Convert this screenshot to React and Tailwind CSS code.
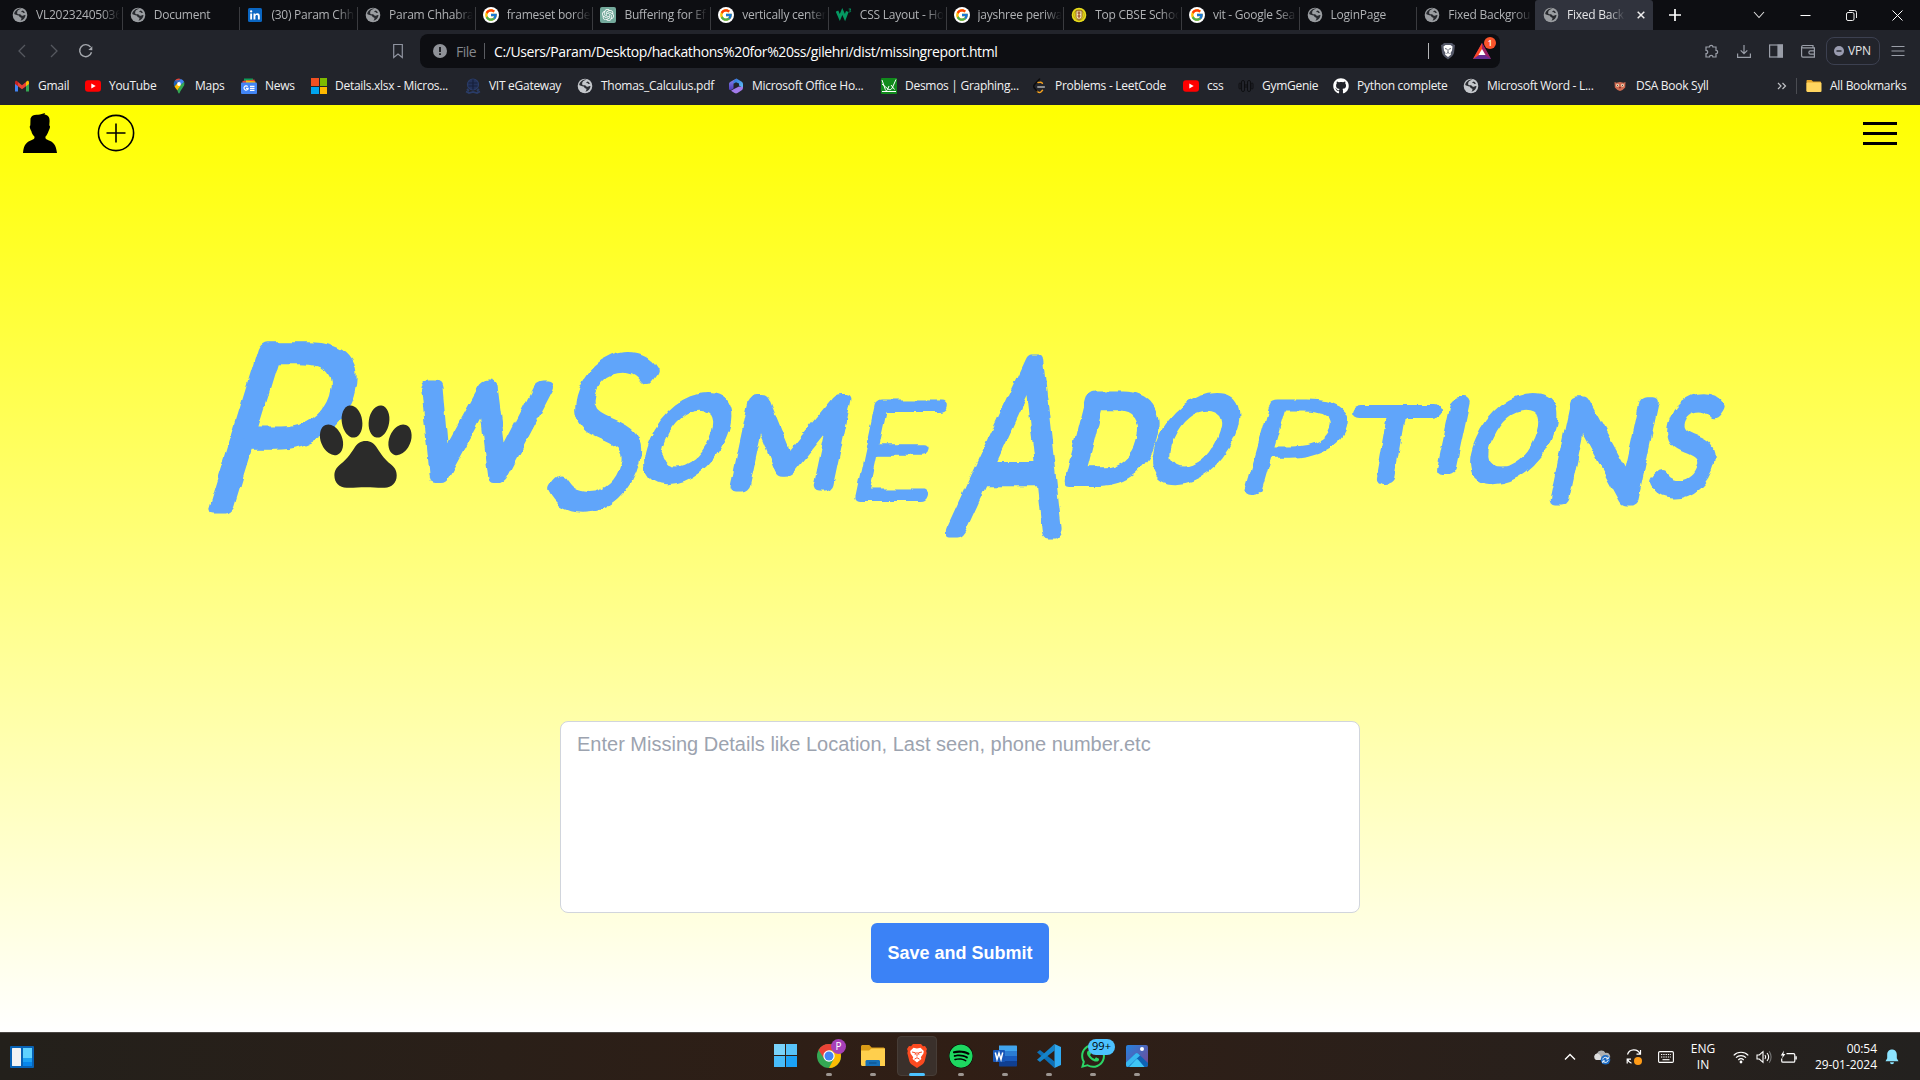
import React from "react";
import { FcGoogle } from "react-icons/fc";
import { SiOpenai, SiWhatsapp } from "react-icons/si";
import { FaGithub, FaSpotify } from "react-icons/fa";

const Globe = ({ light }) => (
  <svg viewBox="0 0 16 16" className="size-4">
    <circle cx="8" cy="8" r="7.3" fill={light ? "#c4c7cb" : "#9a9da1"} />
    <path d="M9.8 1.6C7 2.2 5 3.8 5.1 5.9c.1 1.300 1.300 1.400 2.600 1.400 1.500 0 1.200 1.500 2.500 1.500 1.200 0 1.600-1.300 3.300-.8-.1 2.900-2.300 5.200-5.100 5.700.8-1 1.400-2 .9-2.900-.5-.8-1.900-.5-2.100-1.600C7 7.900 4.500 8.500 2.200 6.900 2.700 4 5.500 1.600 8 1.500zM10.900 3.400c-.8.1-1.700.6-1.600 1.200.1.700 1.400.6 1.900 1.200.4.500 1.300.3 1.600-.1-.3-.9-1-1.900-1.900-2.300z" fill="#17191e" opacity=".88" />
  </svg>
);
const Google = () => (
  <span className="flex size-4 items-center justify-center rounded-full bg-white"><FcGoogle className="size-[14px]" /></span>
);
const LinkedIn = () => (
  <svg viewBox="0 0 16 16" className="size-4">
    <rect x="1" y="1" width="14" height="14" rx="1.500" fill="#0a66c2" />
    <path d="M3.200 6.500h1.900v6H3.200zM6.500 6.500h1.800v.9c.4-.7 1.100-1.100 2-1.100 1.900 0 2.500 1.200 2.500 2.900v3.300h-1.900V9.600c0-.9-.2-1.600-1.100-1.600-1 0-1.400.7-1.400 1.600v2.900H6.500z" fill="#fff" />
    <circle cx="4.150" cy="4.400" r="1.150" fill="#fff" />
  </svg>
);
const Gpt = () => (
  <span className="flex size-4 items-center justify-center rounded-[2px] bg-[#74aa9c]"><SiOpenai className="size-3 text-white" /></span>
);
const W3 = () => (
  <svg viewBox="0 0 16 16" className="size-4" fill="none" stroke="#059862">
    <path d="M1 4l2.800 6.500L6.300 4.500l2.700 6 2.300-6" strokeWidth="2.800" />
    <path d="M12.700 2h2.200l-1.200 1.300c1.600.2 1.300 2-.8 1.500" strokeWidth=".9" />
  </svg>
);
const School = () => (
  <svg viewBox="0 0 16 16" className="size-4">
    <circle cx="8" cy="8" r="7.300" fill="#e8dc1c" />
    <circle cx="8" cy="8" r="5.300" fill="none" stroke="#a99a12" strokeWidth=".8" />
    <path d="M5 3.800h6v5.500c0 2-1.500 3-3 3.700-1.500-.7-3-1.700-3-3.700z" fill="#f5eeb0" stroke="#7d3d16" strokeWidth=".8" />
    <path d="M8 4.500v7M6.500 6h3M6.500 9h3" stroke="#94391d" strokeWidth="1" />
  </svg>
);
const Gmail = () => (
  <svg viewBox="0 0 16 16" className="size-4">
    <path d="M1 4.500V13.500h3V7z" fill="#4285f4" />
    <path d="M15 4.500V13.500h-3V7z" fill="#34a853" />
    <path d="M12 4l1-1c1-.7 2 0 2 1.300V6l-3 2.300z" fill="#fbbc04" />
    <path d="M4 4L3 3c-1-.7-2 0-2 1.300V6l3 2.300z" fill="#c5221f" />
    <path d="M4 4l4 3.200L12 4v4.200l-4 3-4-3z" fill="#ea4335" />
  </svg>
);
const YouTube = () => (
  <svg viewBox="0 0 16 16" className="size-4">
    <rect y="2.300" width="16" height="11.400" rx="3" fill="#f00" />
    <path d="M6.300 5.500v5L10.700 8z" fill="#fff" />
  </svg>
);
const MapsPin = () => (
  <svg viewBox="0 0 16 16" className="size-4">
    <path d="M3.900 2.600A5.400 5.400 0 0 1 9.700.9L6.500 4.800z" fill="#ea4335" />
    <path d="M9.700.9c1.700.5 3 1.700 3.500 3.200L9.800 7.700 6.500 4.800z" fill="#4285f4" />
    <path d="M3.900 2.600c-1.500 2-1.500 4-.4 6l6-7.100z" fill="#1a73e8" opacity=".75" />
    <path d="M13.200 4.100c.8 2.500-.5 4.400-2 6.300L6.600 9.300z" fill="#34a853" />
    <path d="M3.500 8.600c1 1.500 1.800 2.400 2.800 3.800L9.800 7.700 6.300 5.300z" fill="#fbbc04" />
    <path d="M6.300 12.400C7 13.500 7.300 15.500 8 15.500s1-2.500 3.200-5.100L9.800 7.700z" fill="#34a853" />
    <circle cx="8" cy="6" r="1.900" fill="#fff" />
  </svg>
);
const News = () => (
  <svg viewBox="0 0 16 16" className="size-4">
    <path d="M3 .5h9v6H3z" fill="#0c9d58" />
    <path d="M1.500 3l12-1.500.8 5H1.500z" fill="#ea4335" />
    <path d="M5 2.500l9.500 1V8H5z" fill="#fbbc04" />
    <rect y="4.500" width="16" height="11.500" rx="1" fill="#4285f4" />
    <path d="M6.700 8.600a2.100 2.100 0 1 0 .5 1.700H5M9 8.300h4.500M9 10.300h4.500M9 12.300h4.500" stroke="#fff" strokeWidth="1.200" fill="none" />
  </svg>
);
const MsSquares = () => (
  <span className="grid size-4 grid-cols-2 gap-px">
    <i className="bg-[#f25022]" /><i className="bg-[#7fba00]" /><i className="bg-[#00a4ef]" /><i className="bg-[#ffb900]" />
  </span>
);
const Vit = () => (
  <svg viewBox="0 0 16 16" className="size-4" fill="none" stroke="#2a3c68" strokeWidth="1.200">
    <circle cx="8" cy="6.500" r="5.500" fill="#24325a" />
    <path d="M3.500 5h9M3.500 8h9M8 1.500v10" stroke="#17203b" />
    <path d="M1 13.500l3 1.500 4-1 4 1 3-1.500M2 11l2 2M14 11l-2 2" strokeWidth="1.800" />
  </svg>
);
const Office = () => (
  <svg viewBox="0 0 16 16" className="size-4">
    <defs>
      <linearGradient id="ofA" x1="0" y1="0" x2="0" y2="1"><stop stopColor="#8d8cf0" /><stop offset="1" stopColor="#4b37b8" /></linearGradient>
      <linearGradient id="ofB" x1="0" y1="0" x2="1" y2="1"><stop stopColor="#2b6fd8" /><stop offset="1" stopColor="#62c2f7" /></linearGradient>
    </defs>
    <path d="M8.500.5L2.500 3.700C1.500 4.200 1 5 1 6v4.500c0 1.300 1 2 2 1.500l2.500-1.500V5.700z" fill="url(#ofA)" />
    <path d="M8.500.5l5.300 3.200c.8.500 1.200 1.300 1.200 2.200v4L11 7.500V5.500L8 4.200 5.500 5.700V3z" fill="url(#ofB)" />
    <path d="M15 9c0 2-.5 2.800-1.300 3.300L9.500 15c-1 .6-2 .6-3 0L3 12.700l3-1.700 5-2.500z" fill="#a27bea" />
  </svg>
);
const Desmos = () => (
  <svg viewBox="0 0 16 16" className="size-4" fill="none" stroke="#fff" strokeWidth="1">
    <rect width="16" height="16" rx="1" fill="#118a1c" stroke="none" />
    <path d="M1 2l3.300 9.500c.6 1.700 1.500 1.700 2.200 0L8 8M1 6l6 5c1.500 1.200 3 1 4.200-1L15 1.500M10 7l3.500 4.500M1 13.500h14" />
  </svg>
);
const Leet = () => (
  <svg viewBox="0 0 16 16" className="size-4" fill="none" strokeWidth="1.500" strokeLinecap="round">
    <path d="M8.600 1L3.500 6.500c-1 1.200-1 2.500 0 3.600" stroke="#0b0b0d" />
    <path d="M7 4.500L9 4.300c1-.3 1.600.2 2.400 1M6 13l.8.800c1 1 2.300 1 3.300 0l1.400-1.500" stroke="#f5a11f" />
    <path d="M3.500 10.300L6 13" stroke="#0b0b0d" />
    <path d="M6.800 9h6.500" stroke="#b3b3b3" />
  </svg>
);
const Gym = () => (
  <svg viewBox="0 0 16 16" className="size-4" fill="none" stroke="#0e0f12" strokeWidth="1">
    <rect x="1" y="5" width="2" height="6" rx="1" /><rect x="3.500" y="2.500" width="3" height="11" rx="1.400" />
    <rect x="9.500" y="2.500" width="3" height="11" rx="1.400" /><rect x="13" y="5" width="2" height="6" rx="1" /><path d="M6.500 7h3M6.500 9h3" />
  </svg>
);
const Owl = () => (
  <svg viewBox="0 0 16 16" className="size-4">
    <path d="M2.500 4l2 .8 3.500-.8 3.500.8 2-.8-.3 5.500L10.500 12 8 13l-2.500-1-2.700-2.500z" fill="#cf6b52" />
    <circle cx="5.500" cy="7.300" r="1.500" fill="#f5d7b8" /><circle cx="10.500" cy="7.300" r="1.500" fill="#f5d7b8" />
    <circle cx="5.500" cy="7.300" r=".6" fill="#333" /><circle cx="10.500" cy="7.300" r=".6" fill="#333" /><path d="M7 9h2l-1 2z" fill="#7a2a20" />
  </svg>
);
const FolderSmall = () => (
  <svg viewBox="0 0 16 16" className="size-4">
    <path d="M.5 3c0-.6.400-1 1-1h4l1.500 1.500h7c.6 0 1 .400 1 1V13H.5z" fill="#e4a52a" />
    <rect x=".5" y="4.500" width="15" height="9.500" rx="1" fill="#ffd560" />
  </svg>
);

const tabs = [
  ["VL20232405036", Globe], ["Document", Globe], ["(30) Param Chh", LinkedIn], ["Param Chhabra.", Globe],
  ["frameset borde", Google], ["Buffering for Ef", Gpt], ["vertically center", Google], ["CSS Layout - Ho", W3],
  ["jayshree periwa", Google], ["Top CBSE Schoo", School], ["vit - Google Sea", Google], ["LoginPage", Globe], ["Fixed Backgrou", Globe],
];

const bookmarks = [
  ["Gmail", Gmail, "w-[71px]"], ["YouTube", YouTube, "w-[86px]"], ["Maps", MapsPin, "w-[70px]"], ["News", News, "w-[70px]"],
  ["Details.xlsx - Micros...", MsSquares, "w-[154px]"], ["VIT eGateway", Vit, "w-[112px]"], ["Thomas_Calculus.pdf", () => <Globe light />, "w-[151px]"],
  ["Microsoft Office Ho...", Office, "w-[153px]"], ["Desmos | Graphing...", Desmos, "w-[150px]"], ["Problems - LeetCode", Leet, "w-[152px]"],
  ["css", YouTube, "w-[55px]"], ["GymGenie", Gym, "w-[95px]"], ["Python complete", () => <FaGithub className="size-4 text-white" />, "w-[130px]"],
  ["Microsoft Word - L...", () => <Globe light />, "w-[149px]"], ["DSA Book Syll", Owl, "w-[120px]"],
];

function TabBar() {
  return (
    <div className="flex h-[30px] shrink-0 bg-[#0d0e12] text-[12px] tracking-[-0.24px] text-[#b0b2b5]">
      <div className="flex pl-[5px]">
        {tabs.map(([label, Icon], i) => (
          <div key={i} className="flex h-[30px] w-[117.700px] shrink-0 items-center pl-[7px]">
            <span className="shrink-0"><Icon /></span>
            <span className="ml-2 w-[84px] overflow-hidden whitespace-nowrap [mask-image:linear-gradient(to_right,black_78%,transparent)]">{label}</span>
            <span className={i === 12 ? "hidden" : "ml-auto h-[23px] w-px shrink-0 self-end bg-[#3a3b3f]"} />
          </div>
        ))}
      </div>
      <div className="flex h-[30px] w-[118px] items-center rounded-t-[3px] bg-[#30333d] pl-[8px] text-[#e2e3e5]">
        <Globe />
        <span className="ml-2 w-[58px] overflow-hidden whitespace-nowrap [mask-image:linear-gradient(to_right,black_70%,transparent)]">Fixed Back</span>
        <svg viewBox="0 0 8 8" className="ml-[12px] size-2" stroke="#eee" strokeWidth="1.500"><path d="M.7.7l6.600 6.600M7.300.7L.7 7.300" /></svg>
      </div>
      <svg viewBox="0 0 12 12" className="mt-[9px] ml-[16px] size-3" stroke="#fff" strokeWidth="1.700"><path d="M6 0v12M0 6h12" /></svg>
      <div className="ml-auto flex items-center gap-[35px] pr-[17px]">
        <svg viewBox="0 0 12 12" className="size-3" fill="none" stroke="#ddd" strokeWidth="1.100"><path d="M1 3l5 5.500L11 3" /></svg>
        <svg viewBox="0 0 11 11" className="size-[11px]" stroke="#fff"><path d="M.5 5.500h10" /></svg>
        <svg viewBox="0 0 11 11" className="size-[11px]" fill="none" stroke="#eee"><rect x=".5" y="2.500" width="7.500" height="8" rx="1.500" /><path d="M3 .5h5.500a2 2 0 0 1 2 2V8" /></svg>
        <svg viewBox="0 0 11 11" className="size-[11px]" stroke="#fff"><path d="M.5.5l10 10M10.500.5l-10 10" /></svg>
      </div>
    </div>
  );
}

function Toolbar() {
  const ic = "size-4 shrink-0";
  return (
    <div className="flex h-[42px] shrink-0 items-center text-[14px] text-white">
      <div className="flex w-[420px] items-center pl-[14px]">
        <svg viewBox="0 0 16 16" className={ic} fill="none" stroke="#55585f" strokeWidth="1.300"><path d="M11 2L5 8l6 6" /></svg>
        <svg viewBox="0 0 16 16" className="ml-4 size-4" fill="none" stroke="#55585f" strokeWidth="1.300"><path d="M5 2l6 6-6 6" /></svg>
        <svg viewBox="0 0 16 16" className="ml-4 size-4" fill="none" stroke="#a5a8ae" strokeWidth="1.400"><path d="M13.500 9.200A6 6 0 1 1 12.600 4.200" /><path d="M14.300 3.300v4l-4-.3z" fill="#a5a8ae" stroke="none" /></svg>
        <svg viewBox="0 0 16 16" className="mr-[14px] ml-auto size-4" fill="none" stroke="#9094a0" strokeWidth="1.200"><path d="M3.700 1.500h8.600v13L8 11l-4.300 3.500z" /></svg>
      </div>
      <div className="flex h-[34px] w-[1080px] items-center rounded-lg bg-[#0d0e12] pl-[12px]">
        <svg viewBox="0 0 16 16" className={ic}><circle cx="8" cy="8" r="7" fill="#8f9298" /><path d="M7.100 4h1.800v5H7.100zM7.100 10.300h1.800v1.800H7.100z" fill="#17181c" /></svg>
        <span className="ml-[8px] w-[22px] tracking-[-0.5px] text-[#85888e]">File</span>
        <span className="ml-[6px] h-4 w-px bg-[#5a5c61]" />
        <span className="ml-[9px] tracking-[-0.4px] whitespace-nowrap">C:/Users/Param/Desktop/hackathons%20for%20ss/gilehri/dist/missingreport.html</span>
        <span className="mr-[11px] ml-auto h-4 w-px bg-[#b5b6b8]" />
        <svg viewBox="0 0 16 18" className="h-[18px] w-4">
          <path d="M4 1h8l1.500 1.500 1.500.5-1 8c-.5 2.500-3.500 4.500-6 6.500-2.500-2-5.500-4-6-6.500L1 3l1.500-.5z" fill="#545868" />
          <path d="M5.500 3h5l2 1.500-.5 4L10.500 11l.5 1.500L8 15l-3-2.500.5-1.500L4 8.500l-.5-4z" fill="#fff" />
          <path d="M5 6.500l2 .7M11 6.500l-2 .7M8 7v3.500M6.500 11.500L8 10.500l1.500 1" stroke="#545868" strokeWidth=".9" fill="none" />
        </svg>
        <div className="relative mr-[9px] ml-[17px] size-[18px]">
          <svg viewBox="0 0 18 18" className="size-[18px]"><path d="M9 1L0 17h18z" fill="#662d91" /><path d="M9 1L0 17l9-6z" fill="#ff4724" /><path d="M9 1l9 16-9-6z" fill="#9e1f63" /><path d="M9 7l-3.500 6h7z" fill="#fff" /></svg>
          <span className="absolute -top-[5px] left-[11px] flex size-3 items-center justify-center rounded-full bg-[#fb542b] text-[8px] font-semibold leading-none">1</span>
        </div>
      </div>
      <div className="flex flex-1 items-center pl-[204px] text-[#9a9ea8]">
        <svg viewBox="0 0 16 16" className={ic} fill="none" stroke="currentColor" strokeWidth="1.200"><path d="M2 4h3.500a1.700 1.700 0 1 1 3.400 0H12v3.300a1.700 1.700 0 1 1 0 3.400V14H8.900a1.700 1.700 0 1 0-3.400 0H2v-3.300a1.700 1.700 0 1 0 0-3.400z" /></svg>
        <svg viewBox="0 0 16 16" className="ml-4 size-4" fill="none" stroke="currentColor" strokeWidth="1.200"><path d="M8 2v8.500M4.700 7.300L8 10.600l3.300-3.300M1.600 10.500v3.900h12.800v-3.900" /></svg>
        <svg viewBox="0 0 16 16" className="ml-4 size-4" fill="none" stroke="currentColor" strokeWidth="1.200"><rect x="1.600" y="2" width="12.800" height="12" /><path d="M10 2h4.400v12H10z" fill="currentColor" /></svg>
        <svg viewBox="0 0 16 16" className="ml-4 size-4" fill="none" stroke="currentColor" strokeWidth="1.200"><path d="M1.600 3.500v9.300c0 .9.500 1.300 1.300 1.300h11.500V4.800H3c-1.700 0-1.700-2.300 0-2.300h10v2.300M14.400 7.800H10.500a1.500 1.500 0 0 0 0 3.300h3.900" /></svg>
        <div className="ml-[10px] flex h-[28px] w-[54px] shrink-0 items-center rounded-lg border border-[#3c4050] pl-[7px] text-[12px] tracking-[-0.2px] text-[#e4e5e8]">
          <svg viewBox="0 0 10 10" className="mr-1 size-[10px]"><circle cx="5" cy="5" r="5" fill="#9a9cb0" /><path d="M2.500 5h5" stroke="#22242c" strokeWidth="1.400" /></svg>VPN
        </div>
        <svg viewBox="0 0 16 16" className="ml-[10px] size-4" stroke="currentColor" strokeWidth="1.200"><path d="M1.500 3.500h13M1.500 8h13M1.500 12.500h13" /></svg>
      </div>
    </div>
  );
}

function Bookmarks() {
  return (
    <div className="flex h-[28px] shrink-0 items-center pl-[14px] text-[12px] tracking-[-0.28px] whitespace-nowrap text-[#f1f1f2]">
      {bookmarks.map(([label, Icon, w]) => (
        <div key={label} className={"flex shrink-0 items-center gap-2 " + w}><Icon /><span>{label}</span></div>
      ))}
      <svg viewBox="0 0 10 10" className="ml-auto size-[10px]" fill="none" stroke="#c0c2c6" strokeWidth="1.200"><path d="M1 2l3 3-3 3M5.500 2l3 3-3 3" /></svg>
      <span className="mx-[9px] h-4 w-px bg-[#4a4c52]" />
      <div className="flex w-[114px] items-center gap-2"><FolderSmall /><span>All Bookmarks</span></div>
    </div>
  );
}

// glyph, left, right, top, bottom, slant in degrees, outline thickness, weight
const letters = [
  ["P", 202, 362, 339, 513, 17, 13, 300],
  ["W", 401, 556, 379, 483, 12, 14, 300],
  ["S", 550, 662, 351, 511, 14, 12, 300],
  ["O", 634, 742, 392, 483, 24, 13, 300],
  ["M", 726, 856, 392, 491, 12, 13, 300],
  ["E", 848, 946, 398, 501, 12, 10, 100],
  ["A", 944, 1094, 351, 538, 10, 15, 300],
  ["D", 1061, 1166, 390, 486, 14, 14, 300],
  ["O", 1142, 1250, 392, 483, 24, 13, 300],
  ["P", 1236, 1352, 397, 494, 16, 10, 100],
  ["T", 1342, 1440, 403, 484, 10, 12, 100],
  ["I", 1434, 1470, 396, 475, 12, 14, 300],
  ["O", 1460, 1568, 392, 483, 24, 13, 300],
  ["N", 1545, 1664, 394, 505, 12, 13, 300],
  ["S", 1651, 1728, 392, 497, 14, 13, 300],
];

function Letter({ g, l, r, t, b, a, s, w }) {
  const h = b - t - s;
  const size = h / 0.72;
  const lean = h * Math.tan((a * Math.PI) / 180);
  const side = size * (g === "A" || g === "T" || g === "W" ? 0.01 : 0.07);
  const width = r - l - s - lean + side * 2;
  return (
    <text transform={`translate(${l - 200 + s / 2 - side} ${b - 320 - s / 2}) skewX(${-a})`} fontSize={size} strokeWidth={s} fontWeight={w}
      textLength={g === "I" ? undefined : width} lengthAdjust="spacingAndGlyphs">{g}</text>
  );
}

function Logo() {
  return (
    <svg viewBox="0 0 1540 240" className="h-[240px] w-[1540px] shrink-0" role="img" aria-label="PawSome Adoptions">
      <defs>
        <filter id="rough" x="-2%" y="-5%" width="104%" height="110%" colorInterpolationFilters="sRGB">
          <feTurbulence type="fractalNoise" baseFrequency="0.07" numOctaves="2" seed="4" result="n" />
          <feDisplacementMap in="SourceGraphic" in2="n" scale="6" xChannelSelector="R" yChannelSelector="G" />
        </filter>
      </defs>
      <g filter="url(#rough)" fill="#60a5fa" stroke="#60a5fa" strokeLinejoin="round" strokeLinecap="round" className="font-['Lato',sans-serif]">
        {letters.map(([g, l, r, t, b, a, s, w], i) => <Letter key={i} {...{ g, l, r, t, b, a, s, w }} />)}
      </g>
      <g fill="#2b2b2a">
        <ellipse cx="131.500" cy="119.800" rx="10.700" ry="16" transform="rotate(-22 131.500 119.800)" />
        <ellipse cx="152" cy="101.500" rx="10.200" ry="16.200" transform="rotate(-9 152 101.500)" />
        <ellipse cx="179" cy="101.500" rx="10.200" ry="16.200" transform="rotate(9 179 101.500)" />
        <ellipse cx="200" cy="119.800" rx="10.700" ry="16" transform="rotate(22 200 119.800)" />
        <path d="M165.700 121c5 0 8.500 2.500 11.500 7.200 4.500 7 8 11.500 13.300 15.800 4 3.200 6.200 6.500 6.200 11.500 0 7.500-5 12-12 12.300-6 .3-12-.600-19-.6s-13 .900-19 .6c-7.500-.3-12.300-5-12.300-12.300 0-5 2.300-8.300 6.300-11.500 5.300-4.300 9-8.800 13.500-15.800 3-4.700 6.500-7.200 11.500-7.200z" />
      </g>
    </svg>
  );
}

function Page() {
  return (
    <div className="flex h-[927px] shrink-0 flex-col items-center bg-linear-to-b/srgb from-[#ffff00] to-white font-['Liberation_Sans',sans-serif]">
      <header className="flex h-[56px] w-full shrink-0 items-center pr-[23px] pl-[23px]">
        <svg viewBox="0 0 34 40" className="h-10 w-[34px]"><path d="M7.500 5.500C8.500 2 12 1.500 15 1.800c2.500-.3 5-1 7-1.800l-.5 1.500c3.500.5 5.200 2.500 5.100 6.500l-.3 4.500c1.200.2.800 3-.7 5.500-.8 2.500-2 4.500-3.200 5.800-.2 2 .8 2.600 3 3.500C30.500 29 33 32 34 40H0c.7-8 3.500-11 8.300-12.700 2.300-.9 3.500-1.500 3.200-3.500-1.500-1.500-2.700-3.500-3.200-5.800C7 16 6.200 13 7.300 12.500z" /></svg>
        <svg viewBox="0 0 38 38" className="ml-10 size-[38px]" fill="none" stroke="#000" strokeWidth="1.600"><circle cx="19" cy="19" r="17.600" /><path d="M19 9.500v19M9.500 19h19" /></svg>
        <div className="mr-0 ml-auto flex w-[34px] flex-col gap-[7px]"><i className="h-[3px] bg-black" /><i className="h-[3px] bg-black" /><i className="h-[3px] bg-black" /></div>
      </header>
      <div className="flex h-[560px] w-full shrink-0 items-start justify-center pt-[159px] pl-[20px]"><Logo /></div>
      <textarea placeholder="Enter Missing Details like Location, Last seen, phone number.etc"
        className="h-[192px] w-[800px] shrink-0 resize-none rounded-lg border border-gray-300 bg-white px-4 py-2 text-[20px] leading-7 placeholder:text-[#9ca3af]" />
      <button className="mt-[10px] h-[60px] w-[178px] shrink-0 rounded-md bg-[#3b82f6] text-[18px] font-bold text-white">Save and Submit</button>
    </div>
  );
}

const Chrome = () => (
  <svg viewBox="0 0 24 24" className="size-6">
    <circle cx="12" cy="12" r="12" fill="#34a853" />
    <path d="M1.600 6A12 12 0 0 1 22.650 6.500H12L7.200 14.800z" fill="#ea4335" />
    <path d="M12 6.500h10.650A12 12 0 0 1 12 24l4.800-9.200z" fill="#fbbc04" />
    <circle cx="12" cy="12" r="5.700" fill="#fff" /><circle cx="12" cy="12" r="4.500" fill="#4285f4" />
  </svg>
);
const Explorer = () => (
  <svg viewBox="0 0 24 24" className="size-6"><path d="M0 2.500C0 1.700.7 1 1.500 1h6.700l2.500 2.500H22c1 0 2 .7 2 1.500V12H0z" fill="#d99a16" /><path d="M0 6.500h8l2.500-2H24V22H1.500C.6 22 0 21.300 0 20.500z" fill="#ffcf4d" /><path d="M4.500 22v-4.500C4.500 16.500 5.300 16 6 16h11.500c1 0 1.500.7 1.500 1.500V22z" fill="#1670b8" /><path d="M8 18.500h7.500v1H8z" fill="#0b4d86" /></svg>
);
const BraveIcon = () => (
  <svg viewBox="0 0 20 24" className="h-6 w-5">
    <path d="M6 0h8l2 2.200 2-.2 2 3-.8 2 .5 2-2 8c-.4 1.500-1.200 2.600-2.400 3.400L10 24l-5.300-3.600C3.500 19.600 2.700 18.500 2.300 17l-2-8 .5-2L0 5l2-3 2 .2z" fill="#fb4a20" />
    <path d="M10 4.500l3.500-.8L16.800 7l-.4 2.500-2.600 3.700.6 1.800-1.600 1.200L10 18.500l-2.800-2.300L5.600 15l.6-1.800L3.600 9.500 3.200 7l3.300-3.300z" fill="#fff" />
    <path d="M5 8l3.500.8-.4 2M15 8l-3.500.8.4 2M10 8v4.500M7.500 15.200l2.500-1.500 2.500 1.500" stroke="#fb4a20" strokeWidth="1" fill="none" />
  </svg>
);
const Word = () => (
  <svg viewBox="0 0 24 24" className="size-6"><path d="M6 1.500h17c.6 0 1 .400 1 1V7H6z" fill="#41a5ee" /><path d="M6 7h18v5H6z" fill="#2b7cd3" /><path d="M6 12h18v5H6z" fill="#185abd" /><path d="M6 17h18v4.500c0 .6-.4 1-1 1H7c-.6 0-1-.4-1-1z" fill="#103f91" /><rect y="6" width="12" height="12" rx="1" fill="#1857b8" /><path d="M2.300 8.500l1.700 7 2-6.500 2 6.500 1.700-7" fill="none" stroke="#fff" strokeWidth="1.500" /></svg>
);
const Code = () => (
  <svg viewBox="0 0 24 24" className="size-6"><path d="M17.500 24v-6.500L3 6 0 8.200z" fill="#0c70b8" /><path d="M17.500 0v6.500L3 18 0 15.800z" fill="#1583c9" /><path d="M17.500 0v24L24 21V3z" fill="#2faaf2" /></svg>
);
const Photos = () => (
  <svg viewBox="0 0 22 22" className="size-[22px]"><defs><linearGradient id="ph" x1="0" y1="0" x2="1" y2="1"><stop stopColor="#2383e0" /><stop offset="1" stopColor="#7a4590" /></linearGradient></defs><rect width="22" height="22" rx="2" fill="url(#ph)" /><path d="M0 17.500L9.500 8.500c.8-.7 1.700-.7 2.500 0L22 18v2a2 2 0 0 1-2 2H2a2 2 0 0 1-2-2z" fill="#0f62b5" /><path d="M3 22l7-7.500c.7-.7 1.300-.7 2 0l6.500 7.500z" fill="#3fc6f5" /><path d="M0 17.500L9.500 8.500c.8-.7 1.700-.7 2.500 0l2 2L2 22a2 2 0 0 1-2-2z" fill="#38b8f0" /><circle cx="16" cy="4" r="2" fill="#fff" /></svg>
);

function TaskItem({ children, active, dot = true, badge }) {
  return (
    <div className="relative flex h-12 w-11 items-center justify-center pb-[2px]">
      <div className={active ? "flex h-10 w-10 items-center justify-center rounded border border-[#473d37] bg-[#3a302b]" : "flex size-10 items-center justify-center"}>{children}</div>
      {dot && <span className={active ? "absolute bottom-[5px] h-[3px] w-4 rounded-full bg-[#4cc2ff]" : "absolute bottom-[5px] h-[3px] w-1.5 rounded-full bg-[#9d9691]"} />}
      {badge}
    </div>
  );
}

function Taskbar() {
  return (
    <div className="flex h-12 shrink-0 items-center border-t border-[#4a4643] bg-linear-to-r from-[#23201b] via-[#301e15] to-[#23211f] font-['Open_Sans',sans-serif] text-[12px] text-white">
      <div className="w-[763px] pl-[10px]">
        <svg viewBox="0 0 24 22" className="h-[22px] w-6"><rect width="24" height="22" rx="1" fill="#0862b5" /><rect x="2" y="2" width="9" height="18" rx=".5" fill="#f3f3f3" /><path d="M13 2h9v10h-9z" fill="#5fd2ff" /><path d="M13 12h9v4h-9z" fill="#1ba1f3" /><path d="M13 16h9v4h-9z" fill="#0886ea" /></svg>
      </div>
      <div className="flex">
        <TaskItem dot={false}><span className="grid size-[23px] grid-cols-2 gap-px"><i className="bg-[#79d3fb]" /><i className="bg-[#57c3fa]" /><i className="bg-[#48bcfa]" /><i className="bg-[#1ba2f7]" /></span></TaskItem>
        <TaskItem badge={<span className="absolute top-[6px] left-[24px] flex size-[15px] items-center justify-center rounded-full bg-[#a640b8] text-[10px]">P</span>}><Chrome /></TaskItem>
        <TaskItem><Explorer /></TaskItem>
        <TaskItem active><BraveIcon /></TaskItem>
        <TaskItem><FaSpotify className="size-6 rounded-full bg-black text-[#1ed760]" /></TaskItem>
        <TaskItem><Word /></TaskItem>
        <TaskItem><Code /></TaskItem>
        <TaskItem badge={<span className="absolute top-[6px] left-[17px] flex h-4 w-[27px] items-center justify-center rounded-full bg-[#4cc2ff] text-[11px] text-black">99+</span>}><SiWhatsapp className="size-6 text-[#2bd566]" /></TaskItem>
        <TaskItem><Photos /></TaskItem>
      </div>
      <div className="ml-auto flex items-center">
        <svg viewBox="0 0 12 12" className="size-3" fill="none" stroke="#fff" strokeWidth="1.400"><path d="M1 8.500l5-5 5 5" /></svg>
        <svg viewBox="0 0 18 16" className="ml-[17px] h-4 w-[18px]"><path d="M3.500 11A3.400 3.400 0 0 1 4 4.500 4.700 4.700 0 0 1 12.500 4a3.500 3.500 0 0 1 2 7z" fill="#aeb0b1" /><path d="M3.500 11A3.400 3.400 0 0 1 4 4.500c2 0 4 2 5 6.500z" fill="#ddd" /><circle cx="12.500" cy="10.800" r="4.800" fill="#1d6cc4" /><path d="M9.800 10.500c.3-2.500 4-3 5-.8M15.200 11.200c-.3 2.400-4 3-5 .8M15.200 7.800v2.100h-2.100M9.800 14v-2.100h2.100" stroke="#fff" fill="none" strokeWidth="1" /></svg>
        <svg viewBox="0 0 16 16" className="ml-[15px] size-4" fill="none" stroke="#fff" strokeWidth="1.200"><path d="M1.500 5.500A6.700 6.700 0 0 1 14 5M14.500 1v4.200h-4M5.500 14.300A6.500 6.500 0 0 1 1.500 10M1.200 14.500v-4.300H5" /><circle cx="12" cy="12" r="4" fill="#ff9b17" stroke="none" /></svg>
        <svg viewBox="0 0 16 12" className="ml-4 h-3 w-4" fill="none" stroke="#fff" strokeWidth="1.100"><rect x=".6" y=".6" width="14.800" height="10.800" rx="1.200" /><path d="M3 3.500h10M3 6h10" strokeDasharray="1.300 1" /><path d="M4.500 8.700h7" /></svg>
        <div className="ml-[16px] w-[26px] text-center leading-4">ENG<br />IN</div>
        <svg viewBox="0 0 16 14" className="ml-[17px] h-[14px] w-4" fill="none" stroke="#fff" strokeWidth="1.200"><path d="M.7 5.300a10.300 10.300 0 0 1 14.600 0M3 7.700a7 7 0 0 1 10 0M5.300 10a3.900 3.900 0 0 1 5.400 0" /><circle cx="8" cy="12" r="1.400" fill="#fff" stroke="none" /></svg>
        <svg viewBox="0 0 16 14" className="ml-[7px] h-[14px] w-4" fill="none" stroke="#fff" strokeWidth="1.100"><path d="M1 5v4h2.300L7 12.300V1.700L3.300 5zM9 5c.9 1.200.9 2.800 0 4M11 3c2 2.400 2 5.600 0 8" /><path d="M13.200 1.300c2.400 3.600 2.400 7.800 0 11.400" stroke="#777" /></svg>
        <svg viewBox="0 0 17 14" className="ml-[8px] h-[14px] w-[17px]" fill="none" stroke="#fff" strokeWidth="1.200"><path d="M6.500 3.600h7c.9 0 1.300.5 1.300 1.300v6c0 .9-.5 1.300-1.300 1.300H3c-.9 0-1.300-.5-1.300-1.300V8.500M16.200 6.300v3.200" /><path d="M4 .5L.8 5.500h2l-.9 3 3.500-4.500h-2z" fill="#fff" stroke="none" /></svg>
        <div className="ml-[13px] w-[67px] text-right leading-4 tracking-[-0.05px] whitespace-nowrap">00:54<br />29-01-2024</div>
        <svg viewBox="0 0 14 16" className="mr-[21px] ml-[8px] h-4 w-[14px]"><path d="M7 .5c3 0 4.800 2.200 4.800 5v3.700l1.700 3.100H.5l1.700-3.100V5.500c0-2.800 1.800-5 4.800-5zM5 13.300h4a2 2 0 0 1-4 0z" fill="#8ce4ff" /></svg>
      </div>
    </div>
  );
}

export default function App() {
  return (
    <div className="flex h-[1080px] w-[1920px] flex-col overflow-hidden bg-[#22242b] font-['Open_Sans',sans-serif]">
      <TabBar />
      <Toolbar />
      <Bookmarks />
      <div className="h-[5px] shrink-0" />
      <Page />
      <Taskbar />
    </div>
  );
}
